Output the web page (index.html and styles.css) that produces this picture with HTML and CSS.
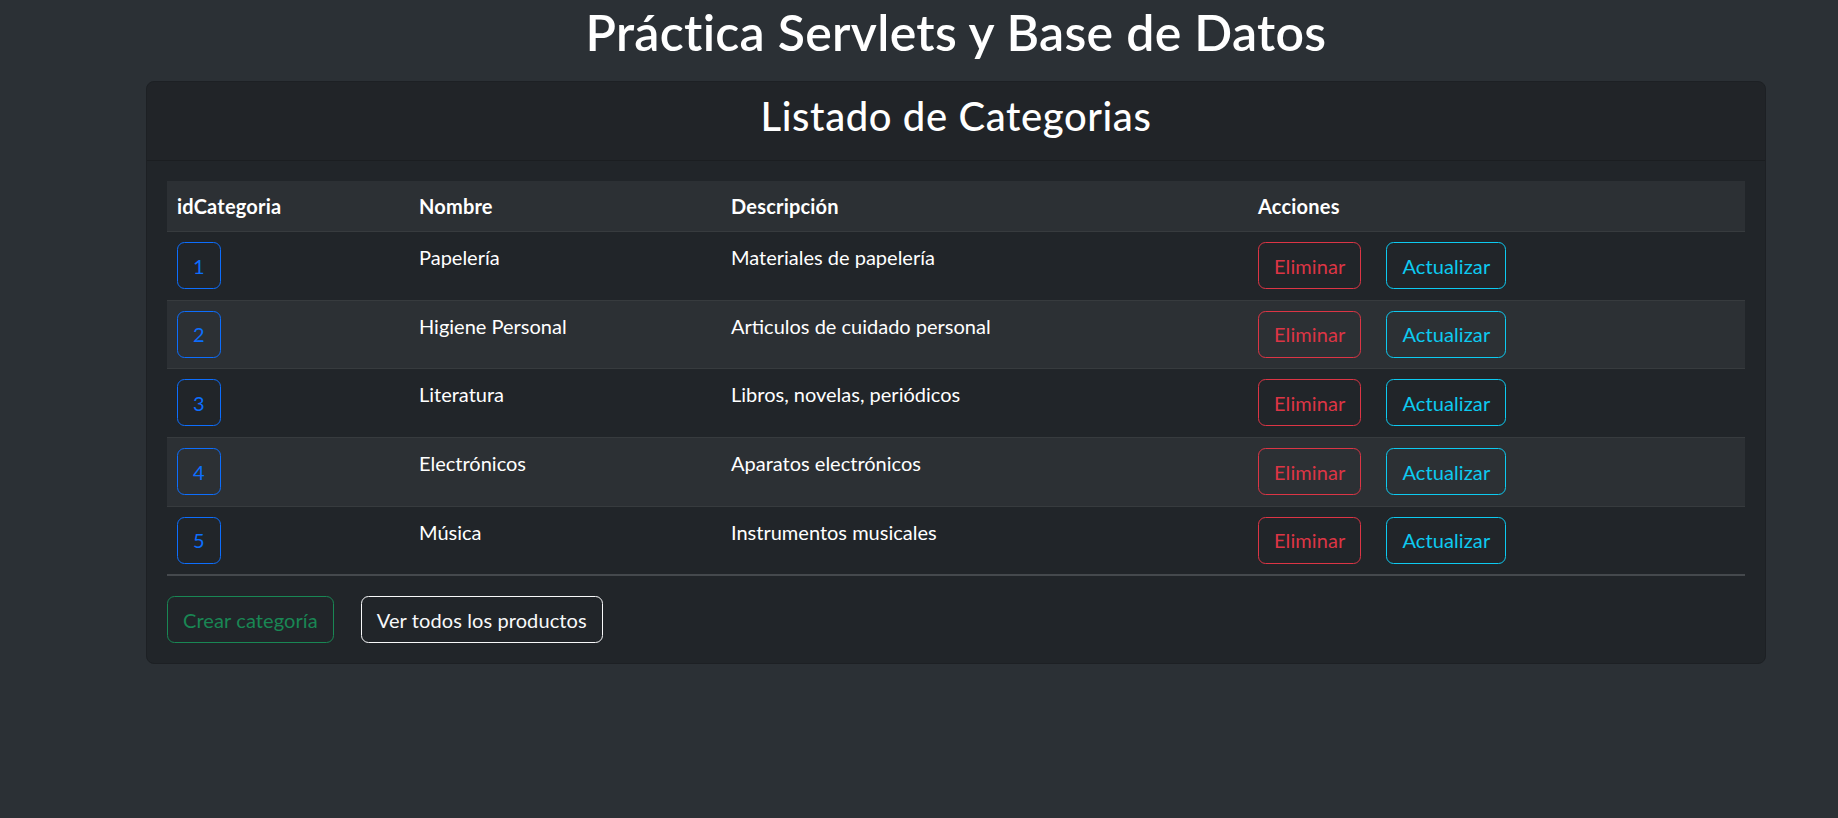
FILE: index.html
```html
<!DOCTYPE html>
<html lang="es">
<head>
<meta charset="utf-8">
<title>Práctica Servlets y Base de Datos</title>
<link rel="stylesheet" href="styles.css">
</head>
<body>
<div class="page">
  <h1 class="title">Práctica Servlets y Base de Datos</h1>
  <div class="card">
    <div class="card-header">
      <h2 class="card-title">Listado de Categorias</h2>
    </div>
    <div class="card-body">
      <table class="table">
        <colgroup>
          <col class="c-id">
          <col class="c-name">
          <col class="c-desc">
          <col class="c-act">
        </colgroup>
        <tbody>
          <tr class="head">
            <th>idCategoria</th>
            <th>Nombre</th>
            <th>Descripción</th>
            <th>Acciones</th>
          </tr>
          <tr>
            <td><button class="btn btn-primary">1</button></td>
            <td>Papelería</td>
            <td>Materiales de papelería</td>
            <td><div class="actions"><button class="btn btn-danger">Eliminar</button><button class="btn btn-info">Actualizar</button></div></td>
          </tr>
          <tr class="alt">
            <td><button class="btn btn-primary">2</button></td>
            <td>Higiene Personal</td>
            <td>Articulos de cuidado personal</td>
            <td><div class="actions"><button class="btn btn-danger">Eliminar</button><button class="btn btn-info">Actualizar</button></div></td>
          </tr>
          <tr>
            <td><button class="btn btn-primary">3</button></td>
            <td>Literatura</td>
            <td>Libros, novelas, periódicos</td>
            <td><div class="actions"><button class="btn btn-danger">Eliminar</button><button class="btn btn-info">Actualizar</button></div></td>
          </tr>
          <tr class="alt">
            <td><button class="btn btn-primary">4</button></td>
            <td>Electrónicos</td>
            <td>Aparatos electrónicos</td>
            <td><div class="actions"><button class="btn btn-danger">Eliminar</button><button class="btn btn-info">Actualizar</button></div></td>
          </tr>
          <tr class="last">
            <td><button class="btn btn-primary">5</button></td>
            <td>Música</td>
            <td>Instrumentos musicales</td>
            <td><div class="actions"><button class="btn btn-danger">Eliminar</button><button class="btn btn-info">Actualizar</button></div></td>
          </tr>
        </tbody>
      </table>
      <div class="footer-actions">
        <button class="btn btn-success">Crear categoría</button>
        <button class="btn btn-light">Ver todos los productos</button>
      </div>
    </div>
  </div>
</div>
</body>
</html>
```

FILE: styles.css
```css
* {
  box-sizing: border-box;
}

html, body {
  margin: 0;
  padding: 0;
}

body {
  background: #2b3035;
  color: #dee2e6;
  font-family: Lato, "Liberation Sans", sans-serif;
  font-size: 20px;
  line-height: 1.5;
}

.page {
  padding: 2px 72px 0 146px;
}

.title {
  margin: 0 0 19px;
  font-size: 50px;
  line-height: 60px;
  font-weight: 600;
  letter-spacing: 0.3px;
  color: #fff;
  text-align: center;
}

.card {
  background: #212529;
  border: 1px solid #1d2024;
  border-radius: 8px;
  overflow: hidden;
}

.card-header {
  padding: 10px 20px;
  background: #212428;
  border-bottom: 1px solid #1b1e21;
}

.card-title {
  margin: 0 0 10px;
  font-size: 40px;
  line-height: 48px;
  font-weight: 500;
  letter-spacing: 0.6px;
  color: #fff;
  text-align: center;
}

.card-body {
  padding: 20px;
}

.table {
  width: 100%;
  border-collapse: collapse;
  margin-bottom: 20px;
  color: #fff;
}

.c-id { width: 242px; }
.c-name { width: 312px; }
.c-desc { width: 527px; }

.table th,
.table td {
  padding: 10px 10px 10.7px;
  text-align: left;
  vertical-align: top;
  border-bottom: 1px solid #373b3e;
}

.table th {
  padding-bottom: 10px;
  font-weight: 700;
  letter-spacing: 0.2px;
}

.table .head,
.table .alt {
  background: #2c3034;
}

.table .last td {
  border-bottom: 2px solid #45494d;
}

.actions {
  display: flex;
  gap: 25px;
}

.btn {
  display: inline-block;
  padding: 7.5px 15px;
  font-family: inherit;
  font-size: 20px;
  line-height: 30px;
  font-weight: 400;
  letter-spacing: 0.1px;
  background: transparent;
  border: 1px solid;
  border-radius: 7.5px;
  cursor: pointer;
}

.btn-primary { color: #0d6efd; border-color: #0d6efd; }
.btn-danger { color: #dc3545; border-color: #dc3545; }
.btn-info { color: #0dcaf0; border-color: #0dcaf0; }
.btn-success { color: #198754; border-color: #198754; }
.btn-light { color: #f8f9fa; border-color: #f8f9fa; }

.footer-actions {
  display: flex;
  gap: 27px;
}
```
